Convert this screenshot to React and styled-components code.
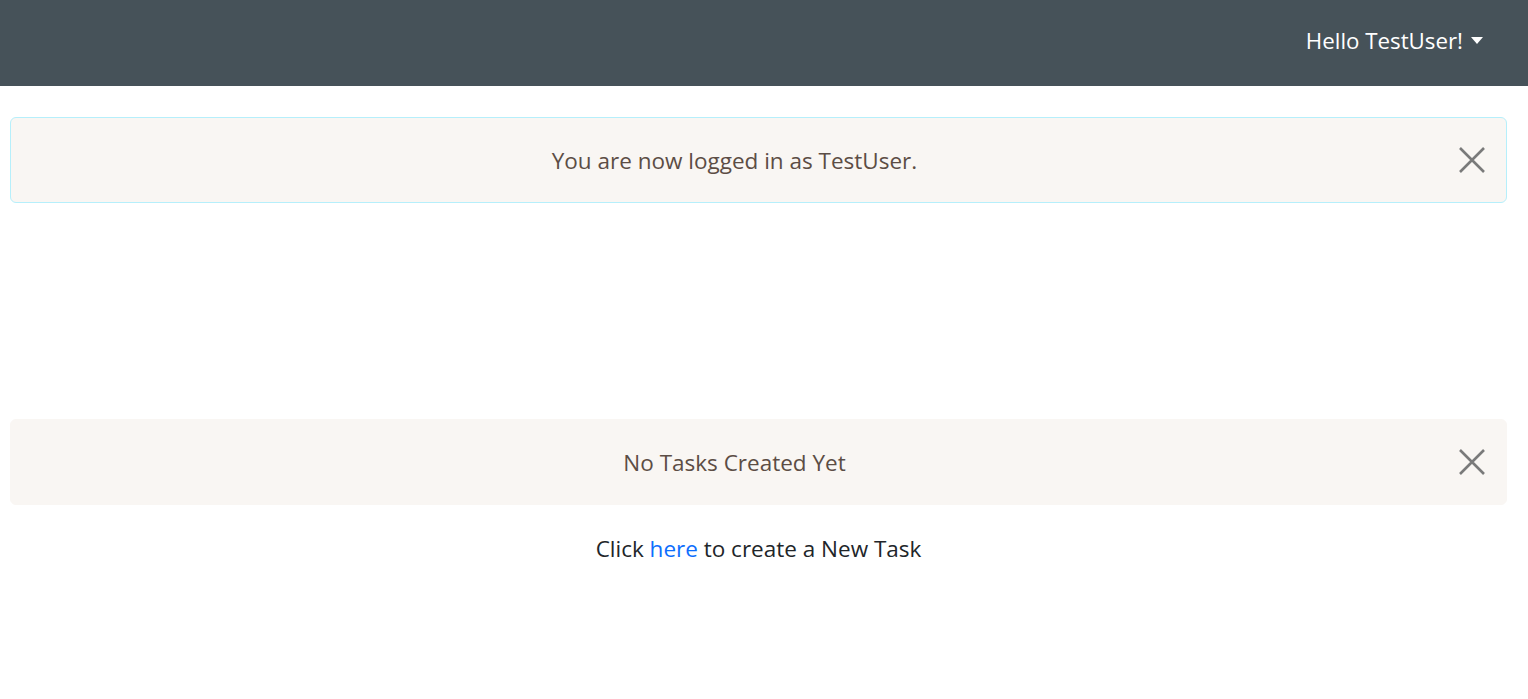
import { createGlobalStyle, styled } from 'styled-components';

const GlobalStyle = createGlobalStyle`
  body {
    margin: 0;
    background: #ffffff;
    font-family: "Open Sans", "Noto Sans", sans-serif;
  }
`;

const Navbar = styled.nav`
  height: 86px;
  background-color: #465259;
  display: flex;
  align-items: center;
  justify-content: flex-end;
  padding: 0 45px 0 0;
  box-sizing: border-box;
`;

const UserMenu = styled.button`
  display: flex;
  align-items: center;
  gap: 8px;
  background: none;
  border: none;
  color: #ffffff;
  font-family: inherit;
  font-size: 22.3px;
  padding: 0;
  margin-top: -6px;
  cursor: pointer;
`;

const Caret = styled.span`
  width: 0;
  height: 0;
  border-left: 6px solid transparent;
  border-right: 6px solid transparent;
  border-top: 7px solid #ffffff;
`;

const Main = styled.main`
  padding: 31px 21px 0 10px;
  display: flex;
  flex-direction: column;
`;

const Alert = styled.div`
  position: relative;
  height: 86px;
  box-sizing: border-box;
  padding: 0 64px 0 16px;
  background-color: #f9f6f3;
  border: 1px solid ${(p) => (p.$bordered ? '#b6effb' : '#f9f6f3')};
  border-radius: 6px;
  display: flex;
  align-items: center;
  justify-content: center;
  color: #5c4d45;
  font-size: 22.5px;
  margin-bottom: ${(p) => p.$gap || 0}px;
`;

const CloseButton = styled.button`
  position: absolute;
  right: 20px;
  top: 50%;
  transform: translateY(-50%);
  background: none;
  border: none;
  padding: 0;
  width: 28px;
  height: 28px;
  display: flex;
  align-items: center;
  justify-content: center;
  cursor: pointer;
`;

const Hint = styled.p`
  margin: 28px 0 0;
  text-align: center;
  color: #212529;
  font-size: 22.5px;
`;

const Link = styled.a`
  color: #0d6efd;
  text-decoration: none;
`;

function CloseIcon() {
  return (
    <svg width="26" height="26" viewBox="0 0 26 26">
      <path d="M1 1 L25 25 M25 1 L1 25" stroke="#7a7a7a" strokeWidth="2.6" />
    </svg>
  );
}

export default function App() {
  return (
    <>
      <GlobalStyle />
      <Navbar>
        <UserMenu>
          Hello TestUser!
          <Caret />
        </UserMenu>
      </Navbar>
      <Main>
        <Alert $bordered $gap={216}>
          You are now logged in as TestUser.
          <CloseButton aria-label="Close">
            <CloseIcon />
          </CloseButton>
        </Alert>
        <Alert>
          No Tasks Created Yet
          <CloseButton aria-label="Close">
            <CloseIcon />
          </CloseButton>
        </Alert>
        <Hint>
          Click <Link href="#">here</Link> to create a New Task
        </Hint>
      </Main>
    </>
  );
}
